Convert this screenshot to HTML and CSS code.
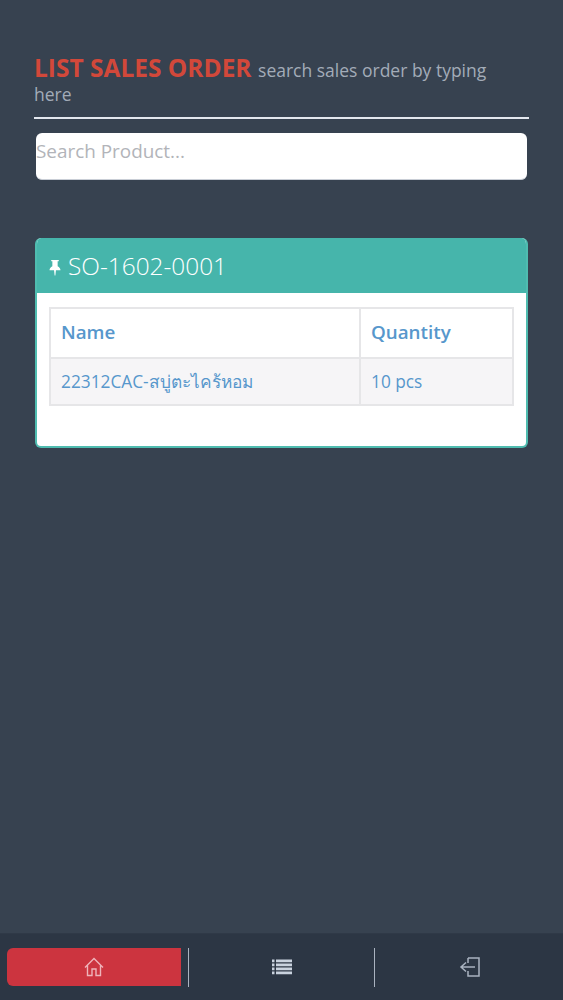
FILE: index.html
```html
<!DOCTYPE html>
<html>
	<head>
		<meta charset="UTF-8">
		<title>List Sales Order</title>
		<link rel="stylesheet" href="styles.css">
	</head>
	<body>
		<div id="con">
			<div class="head">
				<h1 class="title"><b>LIST SALES ORDER</b> <small>search sales order by typing here</small></h1>
			</div>
			<input class="search" type="text" placeholder="Search Product..."/>
			<div class="panel">
				<div class="panel-head">
					<svg class="pin" viewBox="0 0 14 18" width="14" height="17">
						<path fill="#fff" d="M3 1h8v1.500h-1.200v5.200c1.800 1 3 2.300 3 4.100H8l-.6 5.700h-.8L6 11.800H1.200c0-1.800 1.200-3.100 3-4.100V2.500H3z"/>
					</svg>
					<span>SO-1602-0001</span>
				</div>
				<div class="panel-body">
					<table class="list">
						<tr>
							<th class="c1">Name</th>
							<th class="c2">Quantity</th>
						</tr>
						<tr class="odd">
							<td>22312CAC-สบู่ตะไคร้หอม</td>
							<td>10 pcs</td>
						</tr>
					</table>
				</div>
			</div>
		</div>
		<div id="nav">
			<a class="item on">
				<svg viewBox="0 0 20 20" width="20" height="20" fill="none" stroke="#eeb4ba" stroke-width="1.400">
					<path d="M1 10.500L10 1.500l9 9M3.500 8.500V18.500H8v-6.500h4v6.500h4.500V8.500"/>
				</svg>
			</a>
			<i class="line"></i>
			<a class="item mid">
				<svg viewBox="0 0 20 16" width="20" height="16" fill="#c9d2de">
					<path d="M0 0.500h2.500v2.800H0zM4 0.500h16v2.800H4zM0 4.500h2.500v2.800H0zM4 4.500h16v2.800H4zM0 8.500h2.500v2.800H0zM4 8.500h16v2.800H4zM0 12.500h2.500v2.800H0zM4 12.500h16v2.800H4z"/>
				</svg>
			</a>
			<i class="line"></i>
			<a class="item last">
				<svg viewBox="0 0 21 20" width="21" height="20" fill="none" stroke="#a9b3c0" stroke-width="1.500">
					<path d="M9 1h11v18H9v-5M9 6V1M16 10H3M7 5.500L2 10l5 4.500"/>
				</svg>
			</a>
		</div>
	</body>
</html>
```

FILE: styles.css
```css
*{margin: 0;padding: 0;box-sizing: border-box;}
html,body{height: 100%;}
body{
	font-family: "Open Sans","Noto Sans",sans-serif;
	background: #374250;
	display: flex;
	flex-direction: column;
	overflow: hidden;
}
#con{
	flex: 1;
	padding: 56px 34px 0 34px;
}
.head{
	border-bottom: 2px solid #e3e7ee;
	height: 63px;
}
.title{
	font-weight: normal;
	font-size: 17.500px;
	line-height: 24px;
	padding-right: 10px;
}
.title b{
	font-size: 24.500px;
	font-weight: 700;
	color: #d2483a;
}
.title small{
	font-size: 17.500px;
	margin-left: 2px;
	color: #a3acb8;
}
.search{
	display: block;
	width: 491px;
	height: 47px;
	margin: 14px 0 0 2px;
	padding: 0 0 10px 0;
	border: 0;
	border-bottom: 1px solid #c9ced6;
	border-radius: 6px;
	background: #fff;
	font-family: inherit;
	font-size: 18.900px;
	outline: none;
}
.search::placeholder{color: #b2b4b9;opacity: 1;}
.panel{
	margin: 58px 0 0 1px;
	width: 493px;
	height: 210px;
	border: 2px solid #4fbcb0;
	border-top: 0;
	border-radius: 6px;
	background: #fff;
	overflow: hidden;
}
.panel-head{
	height: 55px;
	margin: 0 -2px;
	background: #46b5ab;
	color: #fff;
	display: flex;
	align-items: center;
	padding-left: 13px;
	gap: 6px;
	font-size: 24.400px;
	font-weight: 300;
}
.pin{margin-top: 3px;}
.panel-body{
	padding: 14px 12px;
}
.list{
	width: 465px;
	border-collapse: collapse;
	table-layout: fixed;
	font-size: 17.300px;
	color: #5797cc;
}
.list th,.list td{
	border: 2px solid #e6e6e8;
	text-align: left;
	padding: 0 10px;
}
.list th{
	height: 50px;
	padding-bottom: 2px;
	font-size: 18.800px;
	font-weight: 600;
}
.list td{
	height: 47px;
}
.c1{width: 310px;}
.odd td{background: #f6f5f7;}
#nav{
	height: 67px;
	background: #2c3644;
	border-top: 1px solid #2f3947;
	display: flex;
	align-items: center;
	padding: 0 0 0 7px;
	flex-shrink: 0;
}
.item{
	height: 38px;
	display: flex;
	align-items: center;
	justify-content: center;
}
.on{
	width: 174px;
	background: #cc343f;
	border-radius: 6px 0 0 6px;
	margin-right: 7px;
}
.mid{width: 185px;}
.last{flex: 1;}
.line{
	width: 1px;
	height: 39px;
	background: #aab3c0;
}
```
